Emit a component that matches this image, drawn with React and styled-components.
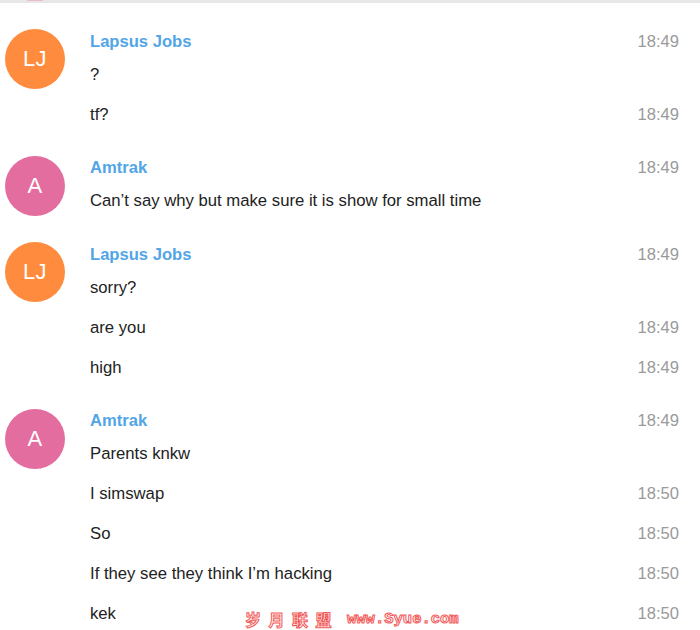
import React from 'react'
import styled, { createGlobalStyle } from 'styled-components'

const GlobalStyle = createGlobalStyle`
  html, body {
    margin: 0;
    padding: 0;
    background: #fff;
  }
  body {
    font-family: "Liberation Sans", Arial, sans-serif;
  }
`

const groups = [
  {
    name: 'Lapsus Jobs',
    initials: 'LJ',
    color: '#ff8b3e',
    time: '18:49',
    messages: [
      { text: '?' },
      { text: 'tf?', time: '18:49' },
    ],
  },
  {
    name: 'Amtrak',
    initials: 'A',
    color: '#e46d9f',
    time: '18:49',
    messages: [{ text: 'Can\u2019t say why but make sure it is show for small time' }],
  },
  {
    name: 'Lapsus Jobs',
    initials: 'LJ',
    color: '#ff8b3e',
    time: '18:49',
    messages: [
      { text: 'sorry?' },
      { text: 'are you', time: '18:49' },
      { text: 'high', time: '18:49' },
    ],
  },
  {
    name: 'Amtrak',
    initials: 'A',
    color: '#e46d9f',
    time: '18:49',
    messages: [
      { text: 'Parents knkw' },
      { text: 'I simswap', time: '18:50' },
      { text: 'So', time: '18:50' },
      { text: 'If they see they think I\u2019m hacking', time: '18:50' },
      { text: 'kek', time: '18:50' },
    ],
  },
]

const App = () => {
  return (
    <>
      <GlobalStyle />
      <Page>
        <TopEdge />
        <List>
          {groups.map((g, i) => (
            <Group key={i}>
              <Avatar $color={g.color}>{g.initials}</Avatar>
              <Body>
                <Header>
                  <Name>{g.name}</Name>
                  <Time>{g.time}</Time>
                </Header>
                {g.messages.map((m, j) => (
                  <Line key={j}>
                    <Text>{m.text}</Text>
                    {m.time && <Time>{m.time}</Time>}
                  </Line>
                ))}
              </Body>
            </Group>
          ))}
        </List>
        <Watermark>
          <Hanzi>岁月联盟</Hanzi>
          <Site>www.Syue.com</Site>
        </Watermark>
      </Page>
    </>
  )
}

const Page = styled.div`
  position: relative;
  width: 700px;
  height: 630px;
  overflow: hidden;
  background: #fff;
`

const TopEdge = styled.div`
  position: relative;
  height: 3px;
  background: #e7e7e7;
  &::before {
    content: '';
    position: absolute;
    left: 27px;
    top: 0;
    width: 16px;
    height: 1px;
    border-radius: 0 0 8px 8px;
    background: #f0b8cf;
  }
`

const List = styled.div`
  display: flex;
  flex-direction: column;
  gap: 20.5px;
  padding: 25.5px 21px 0 5px;
`

const Group = styled.div`
  display: flex;
  align-items: flex-start;
  gap: 25px;
`

const Avatar = styled.div`
  flex: 0 0 60px;
  height: 60px;
  margin-top: 0.5px;
  border-radius: 50%;
  background: ${({ $color }) => $color};
  color: #fff;
  display: flex;
  align-items: center;
  justify-content: center;
  font-size: 22px;
  font-weight: 300;
  letter-spacing: 0.5px;
`

const Body = styled.div`
  flex: 1;
  display: flex;
  flex-direction: column;
`

const Header = styled.div`
  display: flex;
  align-items: center;
  justify-content: space-between;
  height: 26px;
`

const Name = styled.span`
  font-size: 16.6px;
  font-weight: 700;
  color: #52a5e6;
`

const Line = styled.div`
  display: flex;
  align-items: center;
  justify-content: space-between;
  height: 40px;
`

const Text = styled.span`
  font-size: 16.7px;
  color: #222;
`

const Time = styled.span`
  font-size: 16.6px;
  color: #9a9a9a;
`

const Watermark = styled.div`
  position: absolute;
  left: 245px;
  bottom: 2px;
  display: flex;
  align-items: center;
  gap: 8px;
  height: 17px;
  color: #fff;
  -webkit-text-stroke: 1px #f25858;
  font-weight: 700;
`

const Hanzi = styled.span`
  font-family: "Noto Sans CJK SC", sans-serif;
  font-size: 16px;
  line-height: 17px;
  letter-spacing: 7.5px;
`

const Site = styled.span`
  font-family: "Liberation Mono", monospace;
  font-size: 15.5px;
  line-height: 17px;
`

export default App
